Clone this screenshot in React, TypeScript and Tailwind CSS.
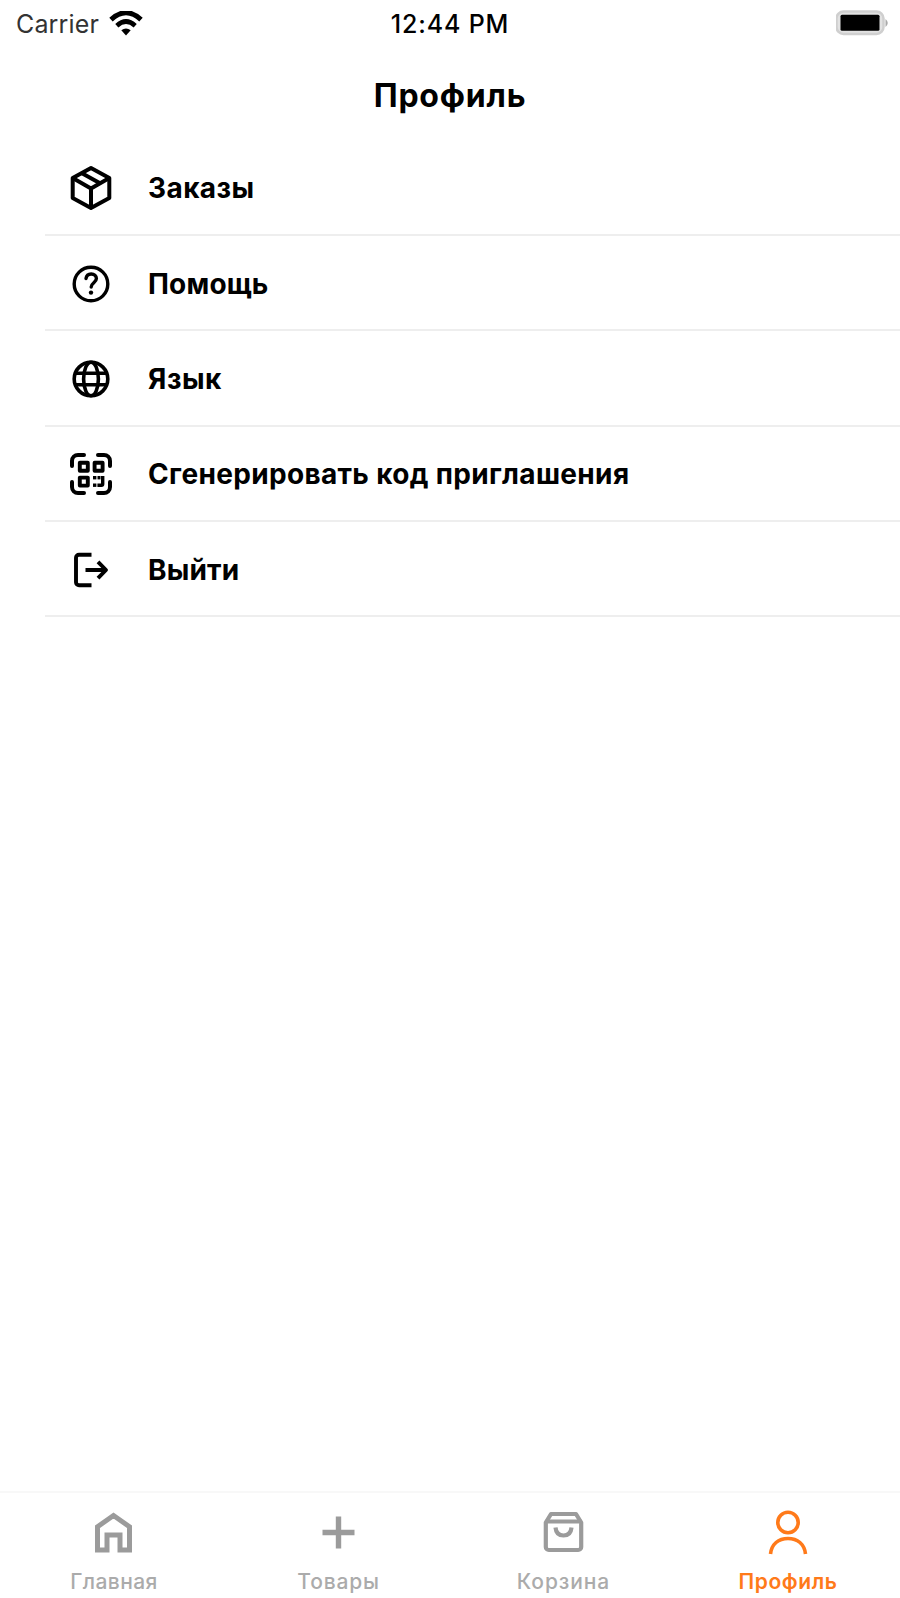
import type { ReactNode } from "react"

type MenuItem = {
  label: string
  icon: ReactNode
  labelClass: string
}

type Tab = {
  label: string
  icon: ReactNode
  labelClass: string
  active?: boolean
}

function BoxIcon() {
  return (
    <svg className="size-12" viewBox="0 0 48 48" fill="none" stroke="currentColor" strokeWidth="4" strokeLinejoin="round">
      <path d="M24 4 42.3 14V34L24 44 5.7 34V14Z" />
      <path d="M5.7 14 24 24.5 42.3 14M24 24.5V44" />
      <path d="M14.5 9 33.500 19.500" />
    </svg>
  )
}

function HelpIcon() {
  return (
    <svg className="size-12" viewBox="0 0 48 48" fill="none" stroke="currentColor" strokeWidth="3.4" strokeLinecap="round" strokeLinejoin="round">
      <circle cx="24" cy="24" r="16.8" />
      <path d="M19 18.6c.4-2.800 2.500-4.600 5.200-4.600 3 0 5.200 1.900 5.200 4.600 0 4-5.200 4.300-5.200 8.400" />
      <circle cx="24" cy="32.600" r="2.200" fill="currentColor" stroke="none" />
    </svg>
  )
}

function GlobeIcon() {
  return (
    <svg className="size-12" viewBox="0 0 48 48" fill="none" stroke="currentColor" strokeWidth="3.6">
      <circle cx="24" cy="24" r="16.8" />
      <ellipse cx="24" cy="24" rx="7.400" ry="16.8" />
      <path d="M8.500 18.200H39.500M8.500 29.800H39.500" />
    </svg>
  )
}

function QrIcon() {
  return (
    <svg className="size-12" viewBox="0 0 48 48" fill="none" stroke="currentColor" strokeWidth="4" strokeLinecap="round">
      <path d="M5 16V11a6 6 0 0 1 6-6h6M31 5h6a6 6 0 0 1 6 6v5M43 32v5a6 6 0 0 1-6 6h-6M17 43h-6a6 6 0 0 1-6-6v-5" />
      <g strokeWidth="3.900" strokeLinejoin="round">
        <rect x="12.800" y="12.800" width="8" height="8" />
        <rect x="27.600" y="12.800" width="8" height="8" />
        <rect x="12.800" y="27.600" width="8" height="8" />
      </g>
      <g fill="currentColor" stroke="none">
        <rect x="26" y="26" width="3.400" height="3.400" />
        <rect x="30.500" y="26" width="3" height="3.400" />
        <rect x="26" y="33.500" width="3.400" height="3.400" />
        <path d="M34 26h3.400v8q0 3-3 3h-4v-3.500h3.600z" />
      </g>
    </svg>
  )
}

function LogoutIcon() {
  return (
    <svg className="size-12" viewBox="0 0 48 48" fill="none" stroke="currentColor" strokeWidth="3.900" strokeLinejoin="round">
      <path d="M24.500 8.700H12a3 3 0 0 0-3 3v24.600a3 3 0 0 0 3 3h12.500" />
      <path d="M18.500 24H39M31 15.800 39 24 31 32.200" />
    </svg>
  )
}

function HomeIcon() {
  return (
    <svg className="size-12" viewBox="0 0 48 48" fill="none" stroke="currentColor" strokeWidth="5">
      <path d="M8.500 42V18.700L24.500 7.500l16 11.200V42H31V27H18v15z" />
    </svg>
  )
}

function PlusIcon() {
  return (
    <svg className="size-12" viewBox="0 0 48 48" fill="none" stroke="currentColor" strokeWidth="5.400">
      <path d="M24.500 8.500v32M8.500 24.500h32" />
    </svg>
  )
}

function BagIcon() {
  return (
    <svg className="size-12" viewBox="0 0 48 48" fill="none" stroke="currentColor" strokeWidth="4.200" strokeLinejoin="round">
      <path d="M6.800 14.500 12 6h25l5.200 8.500v24.500a3 3 0 0 1-3 3H9.800a3 3 0 0 1-3-3z" />
      <path d="M6.800 13.500h35.400" />
      <path d="M16.500 19.500c.5 5.500 3.700 8 8 8s7.500-2.500 8-8" />
    </svg>
  )
}

function UserIcon() {
  return (
    <svg className="size-12" viewBox="0 0 48 48" fill="none" stroke="currentColor" strokeWidth="3.600">
      <circle cx="24" cy="14.500" r="10.200" />
      <path d="M6.500 46C7.500 36 14.500 30.500 24 30.500S40.500 36 41.500 46" />
    </svg>
  )
}

function WifiIcon() {
  return (
    <svg className="h-[26px] w-[34px]" viewBox="0 0 34 26" fill="none" stroke="currentColor">
      <path d="M2 8.700Q17-5.300 32 8.700" strokeWidth="5" />
      <path d="M7.800 14.700Q17 6.300 26.200 14.700" strokeWidth="4.600" />
      <path d="M12.300 19.300Q17 15.500 21.700 19.300L17 24.500z" fill="currentColor" stroke="none" />
    </svg>
  )
}

function BatteryIcon() {
  return (
    <svg className="h-7 w-[54px]" viewBox="0 0 54 28">
      <rect x="0.500" y="1.500" width="47" height="22.500" rx="7" fill="#e2e2e2" stroke="#cfcfcf" strokeWidth="2.500" />
      <rect x="4.500" y="4.800" width="39" height="16" rx="1.500" fill="#000" />
      <path d="M49.500 9q4.500 4 0 8z" fill="#aaa" />
    </svg>
  )
}

const menu: MenuItem[] = [
  { label: "Заказы", icon: <BoxIcon />, labelClass: "tracking-[0.4px]" },
  { label: "Помощь", icon: <HelpIcon />, labelClass: "tracking-[0.2px]" },
  { label: "Язык", icon: <GlobeIcon />, labelClass: "tracking-[0.5px]" },
  { label: "Сгенерировать код приглашения", icon: <QrIcon />, labelClass: "tracking-[0.34px]" },
  { label: "Выйти", icon: <LogoutIcon />, labelClass: "tracking-[0.15px]" },
]

const tabs: Tab[] = [
  { label: "Главная", icon: <HomeIcon />, labelClass: "pl-[3px] tracking-[0.4px]" },
  { label: "Товары", icon: <PlusIcon />, labelClass: "pl-[2px] tracking-[0.8px]" },
  { label: "Корзина", icon: <BagIcon />, labelClass: "pl-[2px] tracking-[0.9px]" },
  { label: "Профиль", icon: <UserIcon />, labelClass: "pl-px tracking-[0.6px]", active: true },
]

function StatusBar() {
  return (
    <div className="grid h-12 grid-cols-3 items-center text-[25px] leading-12">
      <div className="flex items-center gap-2.5 pl-4">
        <span className="tracking-[0.15px] text-[#333]">Carrier</span>
        <WifiIcon />
      </div>
      <div className="text-center font-medium tracking-[0.85px]">12:44 PM</div>
      <div className="flex justify-end pr-2.5">
        <BatteryIcon />
      </div>
    </div>
  )
}

export default function App() {
  return (
    <div className="flex h-[1598px] w-[900px] flex-col bg-white font-['Inter','Liberation_Sans',sans-serif] text-black">
      <StatusBar />

      <header className="flex h-[92.5px] items-center justify-center pt-[3px]">
        <h1 className="text-[32px] font-bold tracking-[0.8px]">Профиль</h1>
      </header>

      <ul className="flex-1">
        {menu.map((item) => (
          <li key={item.label} className="ml-[45px] flex h-[95.4px] items-center border-b-2 border-[#eeeeee] pt-[2px] pl-[22px]">
            {item.icon}
            <span className={`ml-[33px] text-[28px] font-bold whitespace-nowrap ${item.labelClass}`}>
              {item.label}
            </span>
          </li>
        ))}
      </ul>

      <nav className="grid h-[107px] grid-cols-4 border-t-2 border-[#f8f8f8]">
        {tabs.map((tab) => (
          <div
            key={tab.label}
            className={`flex flex-col items-center pt-[15px] ${tab.active ? "text-[#ff7a1a]" : "text-[#9b9b9b]"}`}
          >
            {tab.icon}
            <span className={`mt-3 text-[21px] leading-7 ${tab.active ? "font-semibold" : "font-medium text-[#ababab]"} ${tab.labelClass}`}>
              {tab.label}
            </span>
          </div>
        ))}
      </nav>
    </div>
  )
}
